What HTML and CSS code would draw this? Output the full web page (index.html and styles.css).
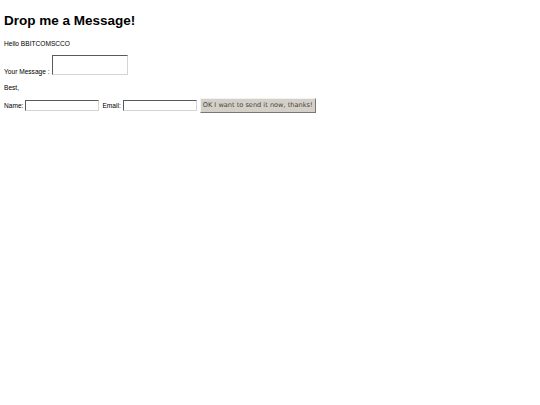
FILE: index.html
```html
<!DOCTYPE html>
<html>
<head>
<meta charset="utf-8">
<link rel="stylesheet" href="styles.css">
</head>
<body>
<h1 class="title">Drop me a Message!</h1>
<p class="hello">Hello BBITCOMSCCO</p>
<div class="msg-row"><span class="label">Your Message :</span><span class="textarea"></span></div>
<p class="best">Best,</p>
<div class="form-row">
  <span class="label">Name:</span><span class="input"></span>
  <span class="label email">Email:</span><span class="input"></span>
  <span class="button">OK I want to send it now, thanks!</span>
</div>
</body>
</html>
```
FILE: styles.css
```css
html, body { margin: 0; padding: 0; background: #fff; }
body { padding: 12px 4px 0 4px; font-family: "Liberation Sans", Arial, sans-serif; color: #000; }
.title { margin: 0; font-size: 13.5px; font-weight: bold; line-height: 18px; }
.hello { margin: 10px 0 0 0; font-size: 6.6px; line-height: 8px; }
.msg-row { margin-top: 7px; display: flex; align-items: flex-end; }
.label { font-size: 6.6px; line-height: 8px; }
.textarea { display: inline-block; width: 74px; height: 18px; margin-left: 2px; margin-bottom: 1px; border: 1px solid #9a9a9a; border-top-color: #5a5a5a; border-left-color: #5a5a5a; border-right-color: #d4d4d4; border-bottom-color: #d4d4d4; }
.best { margin: 8px 0 0 0; font-size: 6.6px; line-height: 8px; }
.form-row { margin-top: 6px; display: flex; align-items: center; }
.input { display: inline-block; width: 72px; height: 9px; margin-left: 2px; border: 1px solid #5a5a5a; border-right-color: #d4d4d4; border-bottom-color: #d4d4d4; }
.email { margin-left: 3px; }
.button { margin-left: 3px; display: inline-block; background: #d4d0c8; font-family: "DejaVu Sans", Verdana, sans-serif; font-size: 6.6px; line-height: 9px; padding: 2px 2px; color: #444; border: 1px solid #777; border-top-color: #f2f2f2; border-left-color: #f2f2f2; }
```
